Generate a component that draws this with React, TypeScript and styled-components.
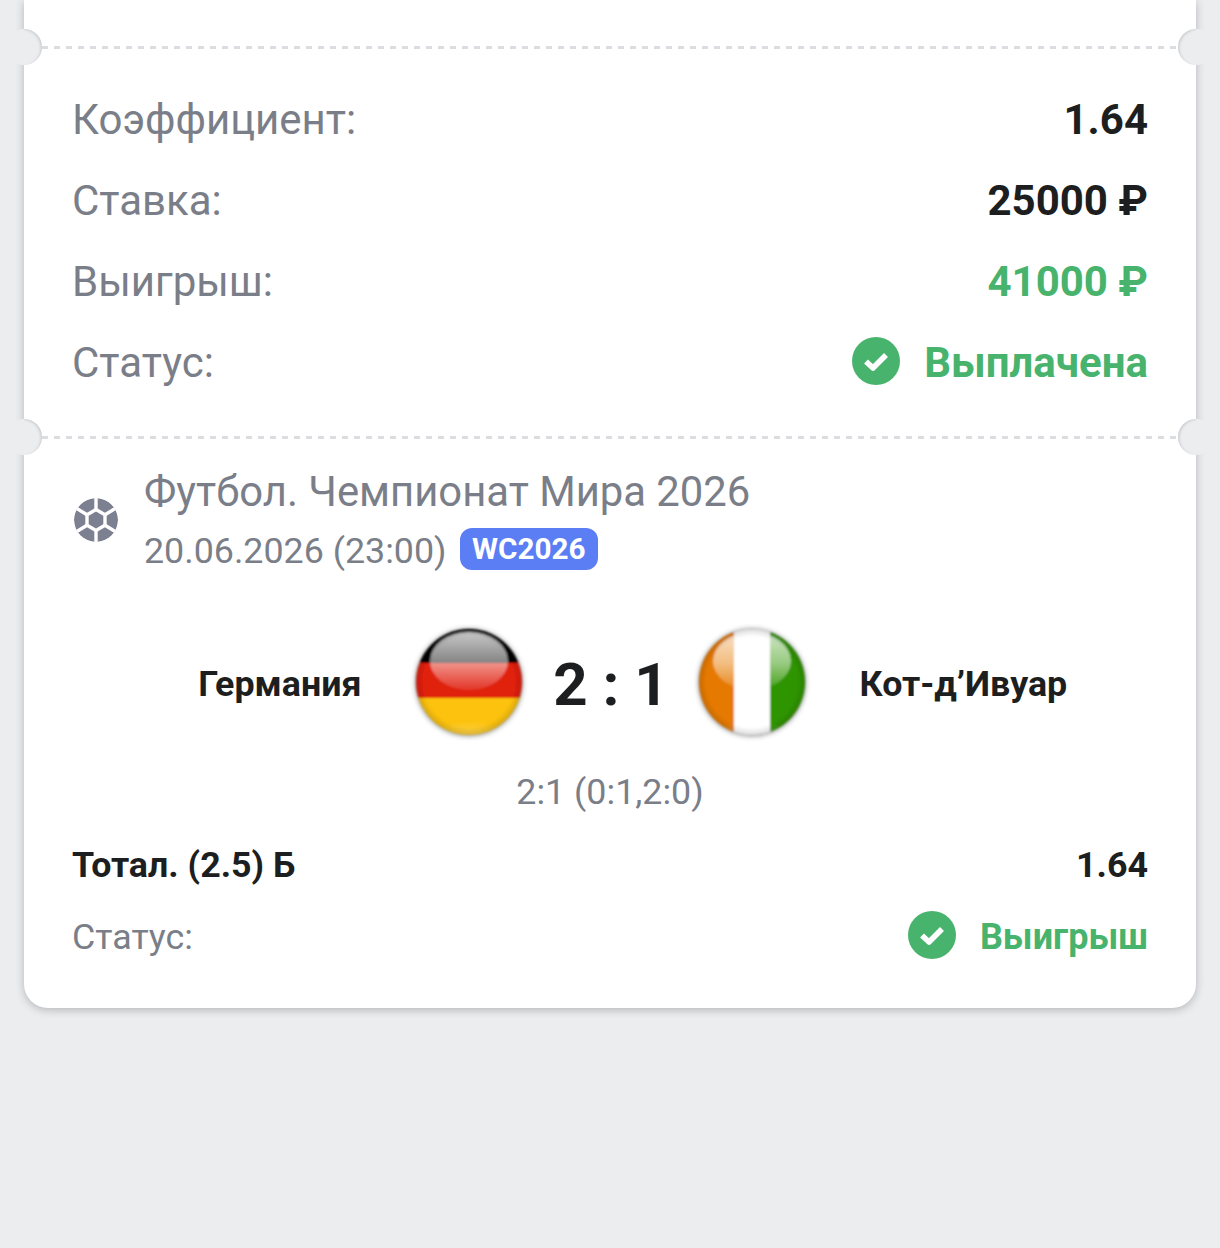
import React from "react";
import styled, { createGlobalStyle } from "styled-components";

const GREEN = "#48b36c";
const GRAY = "#7a7e88";
const DARK = "#1d1e20";
const PAGE = "#ecedef";

const GlobalStyle = createGlobalStyle`
  html, body {
    margin: 0;
    padding: 0;
    background: ${PAGE};
    font-family: Roboto, "Liberation Sans", sans-serif;
  }
`;

const Page = styled.div`
  min-height: 1248px;
  padding: 0 24px;
  box-sizing: border-box;
  overflow: hidden;
`;

const Card = styled.div`
  background: #fff;
  border-radius: 0 0 24px 24px;
  box-shadow: 0 2px 8px rgba(60, 64, 72, 0.32);
`;

const TopStub = styled.div`
  height: 46px;
`;

const Divider = styled.div`
  position: relative;
  height: 3px;
  margin: 0 18px;
  background-image: repeating-linear-gradient(to right, #dcdde0 0 6px, transparent 6px 12px);
`;

const Notch = styled.span<{ $side: "left" | "right" }>`
  position: absolute;
  top: -17px;
  ${(p) => p.$side}: -36px;
  width: 36px;
  height: 36px;
  border-radius: 50%;
  background: ${PAGE};

  &::after {
    content: "";
    position: absolute;
    inset: 0;
    border-radius: 50%;
    box-shadow: inset ${(p) => (p.$side === "left" ? "-2px" : "2px")} 1px 3px -1px rgba(60, 64, 72, 0.22);
    clip-path: ${(p) => (p.$side === "left" ? "inset(0 0 0 18px)" : "inset(0 18px 0 0)")};
  }
`;

const Summary = styled.div`
  padding: 30px 48px 33px 49px;
`;

const SummaryRow = styled.div`
  height: 81px;
  display: flex;
  align-items: center;
  justify-content: space-between;
`;

const SummaryLabel = styled.span`
  font-size: 42px;
  margin-left: -1px;
  color: ${GRAY};
`;

const SummaryValue = styled.span<{ $green?: boolean }>`
  font-size: 42px;
  font-weight: 700;
  color: ${(p) => (p.$green ? GREEN : DARK)};
`;

const StatusWrap = styled.span<{ $big?: boolean }>`
  display: inline-flex;
  align-items: center;
  gap: 24px;
  font-size: ${(p) => (p.$big ? "42px" : "36px")};
  font-weight: 700;
  color: ${GREEN};
`;

const Match = styled.div`
  padding: 28px 48px 47px 48px;
`;

const League = styled.div`
  display: flex;
  align-items: center;
  gap: 26px;
  padding-left: 2px;
`;

const LeagueText = styled.div`
  display: flex;
  flex-direction: column;
`;

const LeagueTitle = styled.div`
  font-size: 41.8px;
  line-height: 50px;
  color: ${GRAY};
`;

const LeagueMeta = styled.div`
  display: flex;
  align-items: flex-start;
  gap: 13px;
  margin-top: 13px;
  font-size: 35.8px;
  line-height: 42px;
  color: ${GRAY};
`;

const Tag = styled.span`
  display: inline-block;
  margin-top: -2px;
  padding: 0 12.5px;
  height: 42px;
  line-height: 42px;
  border-radius: 12px;
  background: #5b7ef5;
  color: #fff;
  font-size: 29.7px;
  font-weight: 700;
`;

const Teams = styled.div`
  display: grid;
  grid-template-columns: 1fr 110px 173px 110px 1fr;
  align-items: center;
  margin-top: 55px;
`;

const TeamName = styled.div<{ $right?: boolean }>`
  padding-top: 4px;
  font-size: 35.8px;
  font-weight: 700;
  color: ${DARK};
  text-align: ${(p) => (p.$right ? "right" : "left")};
  ${(p) => (p.$right ? "padding-right: 52px;" : "padding-left: 53px;")}
`;

const Score = styled.div`
  padding: 4px 0 0 2px;
  font-size: 60px;
  font-weight: 700;
  color: ${DARK};
  text-align: center;
`;

const SubScore = styled.div`
  margin-top: 34px;
  text-align: center;
  font-size: 35.8px;
  line-height: 42px;
  color: ${GRAY};
`;

const BetRow = styled.div`
  display: flex;
  justify-content: space-between;
  align-items: center;
  margin-top: 31px;
  font-size: 35.8px;
  line-height: 42px;
  font-weight: 700;
  color: ${DARK};
`;

const StatusRow = styled.div`
  display: flex;
  justify-content: space-between;
  align-items: center;
  margin-top: 27px;
  height: 48px;
  font-size: 35.8px;
  color: ${GRAY};
`;

const CheckSvg = styled.svg`
  margin-bottom: 4px;
`;

const CheckIcon = () => (
  <CheckSvg width="48" height="48" viewBox="0 0 48 48">
    <circle cx="24" cy="24" r="24" fill={GREEN} />
    <path d="M14 24.5l7 6.5L34 18" fill="none" stroke="#fff" strokeWidth="5.6" strokeLinejoin="round" />
  </CheckSvg>
);

const BallIcon = () => (
  <svg width="44" height="44" viewBox="0 0 44 44" style={{ flex: "none" }}>
    <defs>
      <clipPath id="ballClip">
        <circle cx="22" cy="22" r="22" />
      </clipPath>
    </defs>
    <g clipPath="url(#ballClip)" fill="#7c8090">
      <circle cx="22" cy="22" r="22" />
      <g stroke="#fff" strokeWidth="3.4" fill="none">
        <path d="M22 11.5L31 16.8V27.2L22 32.5L13 27.2V16.8Z" />
        <path d="M22 11.5V0M31 16.8L42 10M31 27.2L42 34M22 32.5V44M13 27.2L2 34M13 16.8L2 10" />
      </g>
    </g>
  </svg>
);

type Stripe = { x: number; y: number; w: number; h: number; color: string };

const FlagBall = ({ id, stripes }: { id: string; stripes: Stripe[] }) => (
  <svg width="110" height="110" viewBox="0 0 110 110" style={{ overflow: "visible" }}>
    <defs>
      <clipPath id={`${id}-clip`}>
        <circle cx="55" cy="55" r="53" />
      </clipPath>
      <linearGradient id={`${id}-gloss`} x1="0" y1="0" x2="0" y2="1">
        <stop offset="0" stopColor="#fff" stopOpacity="0.78" />
        <stop offset="0.55" stopColor="#fff" stopOpacity="0.5" />
        <stop offset="1" stopColor="#fff" stopOpacity="0.1" />
      </linearGradient>
      <radialGradient id={`${id}-glow`} cx="0.5" cy="1" r="0.75">
        <stop offset="0" stopColor="#fff" stopOpacity="0.7" />
        <stop offset="1" stopColor="#fff" stopOpacity="0" />
      </radialGradient>
      <radialGradient id={`${id}-edge`} cx="0.5" cy="0.5" r="0.5">
        <stop offset="0.86" stopColor="#000" stopOpacity="0" />
        <stop offset="1" stopColor="#000" stopOpacity="0.14" />
      </radialGradient>
      <filter id={`${id}-halo`} x="-20%" y="-20%" width="140%" height="140%">
        <feGaussianBlur stdDeviation="2.4" />
      </filter>
      <filter id={`${id}-soft`} x="-10%" y="-10%" width="120%" height="120%">
        <feGaussianBlur stdDeviation="1" />
      </filter>
    </defs>
    <circle cx="55" cy="55.5" r="54" fill="#666" opacity="0.6" filter={`url(#${id}-halo)`} />
    <g filter={`url(#${id}-soft)`}>
      <g clipPath={`url(#${id}-clip)`}>
        {stripes.map((s) => (
          <rect key={`${s.x}-${s.y}`} x={s.x} y={s.y} width={s.w} height={s.h} fill={s.color} />
        ))}
        <ellipse cx="55" cy="34" rx="39" ry="29" fill={`url(#${id}-gloss)`} />
        <ellipse cx="55" cy="108" rx="42" ry="30" fill={`url(#${id}-glow)`} />
        <circle cx="55" cy="55" r="53" fill={`url(#${id}-edge)`} />
      </g>
    </g>
  </svg>
);

const germany: Stripe[] = [
  { x: 0, y: 0, w: 110, h: 36, color: "#050505" },
  { x: 0, y: 36, w: 110, h: 35, color: "#e0200f" },
  { x: 0, y: 71, w: 110, h: 39, color: "#fcc20c" },
];

const ivory: Stripe[] = [
  { x: 0, y: 0, w: 37, h: 110, color: "#e67a00" },
  { x: 37, y: 0, w: 36, h: 110, color: "#ffffff" },
  { x: 73, y: 0, w: 37, h: 110, color: "#2f9400" },
];

const summary = [
  { label: "Коэффициент:", value: "1.64" },
  { label: "Ставка:", value: "25000 ₽" },
  { label: "Выигрыш:", value: "41000 ₽", green: true },
];

const Ticket = () => (
  <Card>
    <TopStub />
    <Divider>
      <Notch $side="left" />
      <Notch $side="right" />
    </Divider>
    <Summary>
      {summary.map((row) => (
        <SummaryRow key={row.label}>
          <SummaryLabel>{row.label}</SummaryLabel>
          <SummaryValue $green={row.green}>{row.value}</SummaryValue>
        </SummaryRow>
      ))}
      <SummaryRow>
        <SummaryLabel>Статус:</SummaryLabel>
        <StatusWrap $big>
          <CheckIcon />
          Выплачена
        </StatusWrap>
      </SummaryRow>
    </Summary>
    <Divider>
      <Notch $side="left" />
      <Notch $side="right" />
    </Divider>
    <Match>
      <League>
        <BallIcon />
        <LeagueText>
          <LeagueTitle>Футбол. Чемпионат Мира 2026</LeagueTitle>
          <LeagueMeta>
            20.06.2026 (23:00)
            <Tag>WC2026</Tag>
          </LeagueMeta>
        </LeagueText>
      </League>
      <Teams>
        <TeamName $right>Германия</TeamName>
        <FlagBall id="de" stripes={germany} />
        <Score>2 : 1</Score>
        <FlagBall id="ci" stripes={ivory} />
        <TeamName>Кот-д’Ивуар</TeamName>
      </Teams>
      <SubScore>2:1 (0:1,2:0)</SubScore>
      <BetRow>
        <span>Тотал. (2.5) Б</span>
        <span>1.64</span>
      </BetRow>
      <StatusRow>
        <span>Статус:</span>
        <StatusWrap>
          <CheckIcon />
          Выигрыш
        </StatusWrap>
      </StatusRow>
    </Match>
  </Card>
);

export default function App() {
  return (
    <Page>
      <GlobalStyle />
      <Ticket />
    </Page>
  );
}
